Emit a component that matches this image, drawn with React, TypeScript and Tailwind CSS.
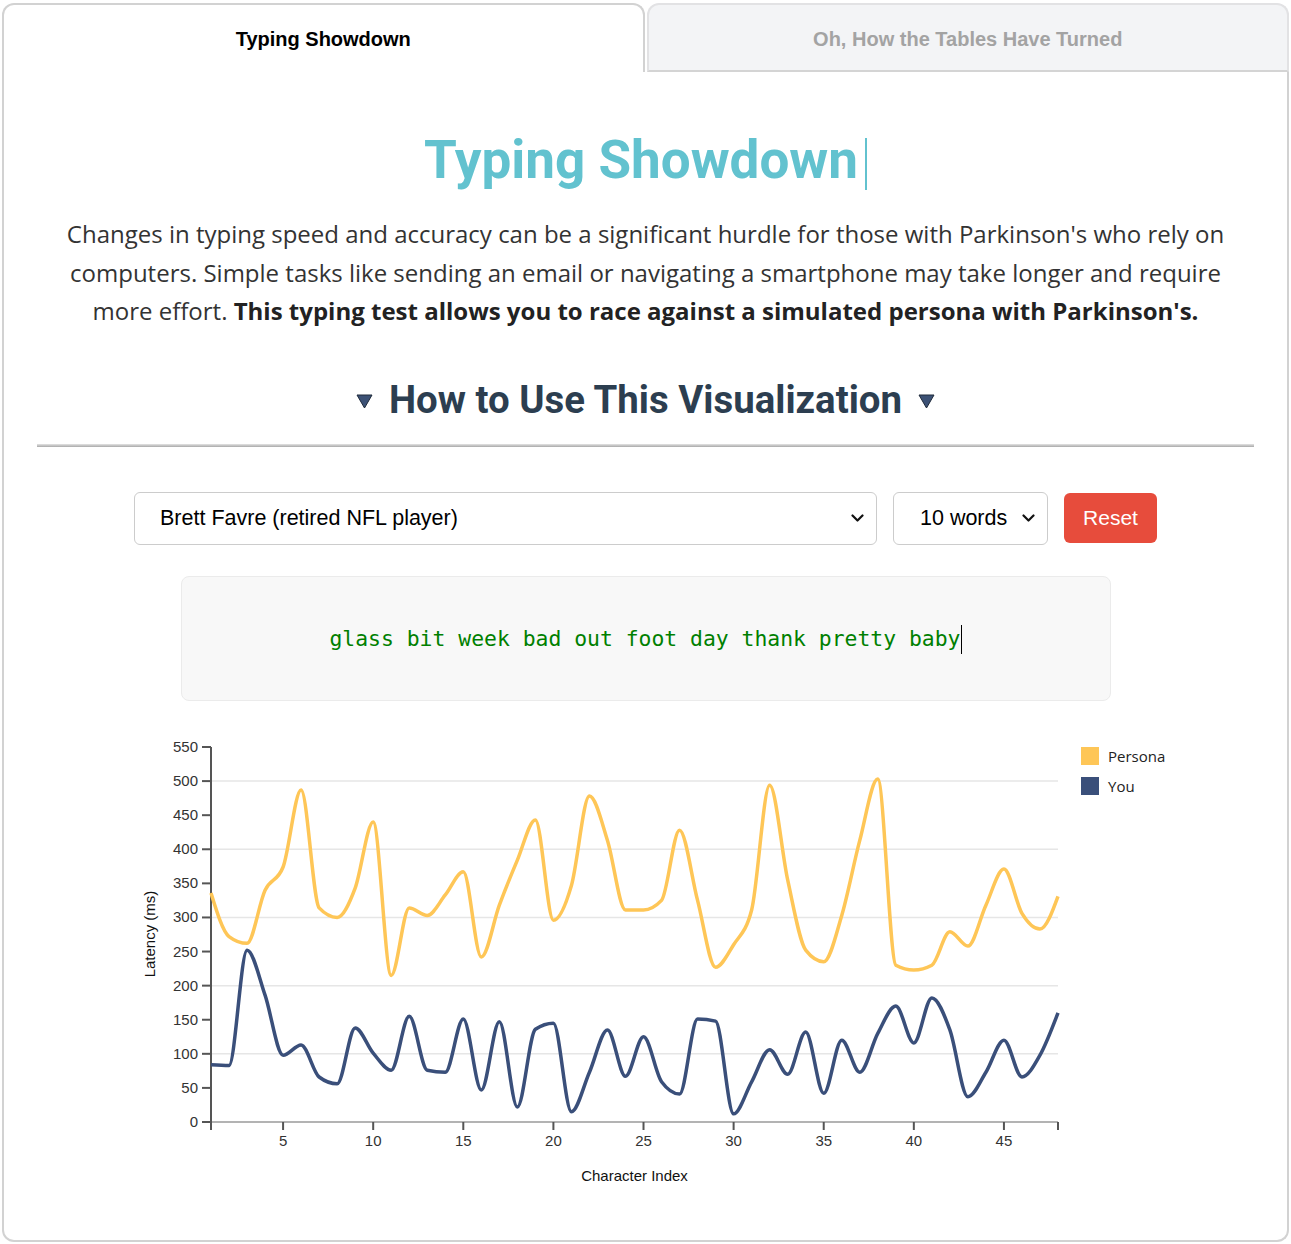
import React from 'react';

const persona = [336, 272, 262, 340, 374, 487, 314, 300, 343, 440, 215, 314, 303, 333, 367, 242, 318, 384, 443, 296, 347, 478, 413, 311, 311, 325, 428, 325, 227, 260, 311, 494, 355, 252, 235, 303, 413, 503, 230, 223, 230, 279, 258, 318, 371, 306, 283, 331];
const you = [84, 83, 252, 186, 98, 113, 66, 56, 138, 101, 76, 155, 76, 73, 151, 47, 147, 22, 136, 145, 15, 73, 135, 67, 125, 59, 41, 151, 148, 12, 59, 106, 70, 132, 42, 120, 73, 130, 170, 116, 182, 135, 37, 73, 120, 66, 98, 160];

// chart geometry (svg coords)
const ox = 174;
const plotW = 847;
const top = 27;
const plotH = 375;
const xs = (i: number) => ox + ((i - 1) * plotW) / 47;
const ys = (v: number) => top + ((550 - v) * plotH) / 550;

// d3 curveMonotoneX, hand-rolled
function monotonePath(pts: [number, number][]) {
  const n = pts.length;
  const t: number[] = new Array(n).fill(0);
  const sign = (v: number) => (v < 0 ? -1 : 1);
  for (let i = 1; i < n - 1; i++) {
    const [x0, y0] = pts[i - 1];
    const [x1, y1] = pts[i];
    const [x2, y2] = pts[i + 1];
    const h0 = x1 - x0;
    const h1 = x2 - x1;
    const s0 = (y1 - y0) / h0;
    const s1 = (y2 - y1) / h1;
    const p = (s0 * h1 + s1 * h0) / (h0 + h1);
    t[i] = (sign(s0) + sign(s1)) * Math.min(Math.abs(s0), Math.abs(s1), 0.5 * Math.abs(p)) || 0;
  }
  t[0] = ((3 * (pts[1][1] - pts[0][1])) / (pts[1][0] - pts[0][0]) - t[1]) / 2;
  t[n - 1] = ((3 * (pts[n - 1][1] - pts[n - 2][1])) / (pts[n - 1][0] - pts[n - 2][0]) - t[n - 2]) / 2;
  let d = `M${pts[0][0]},${pts[0][1]}`;
  for (let i = 0; i < n - 1; i++) {
    const [x0, y0] = pts[i];
    const [x1, y1] = pts[i + 1];
    const dx = (x1 - x0) / 3;
    d += `C${x0 + dx},${y0 + dx * t[i]},${x1 - dx},${y1 - dx * t[i + 1]},${x1},${y1}`;
  }
  return d;
}

const toPts = (arr: number[]) => arr.map((v, i) => [xs(i + 1), ys(v)] as [number, number]);

function Chevron() {
  return (
    <svg width="13" height="8" viewBox="0 0 13 8" className="pointer-events-none absolute right-[12px] top-1/2 -translate-y-1/2">
      <path d="M1.5 1.5 L6.5 6.5 L11.5 1.5" fill="none" stroke="#111" strokeWidth="2.2" strokeLinecap="round" strokeLinejoin="round" />
    </svg>
  );
}

function Tri() {
  return (
    <svg width="17" height="15" viewBox="0 0 17 15" className="mt-[4px]">
      <polygon points="1,1 16,1 8.5,14" fill="#3c5175" stroke="#1f2a3a" strokeWidth="1" strokeLinejoin="round" />
    </svg>
  );
}

function LatencyChart() {
  const yTicks = Array.from({ length: 12 }, (_, i) => i * 50);
  const grid = [100, 200, 300, 400, 500];
  const xTicks = [5, 10, 15, 20, 25, 30, 35, 40, 45];
  const y0 = top + plotH;
  return (
    <svg width="1217" height="490" viewBox="0 0 1217 490" className="block" fontFamily="'Liberation Sans', Arial, sans-serif">
      {grid.map((v) => (
        <line key={v} x1={ox} x2={ox + plotW} y1={ys(v)} y2={ys(v)} stroke="#e6e6e6" strokeWidth="1.5" />
      ))}
      {/* x axis */}
      <line x1={ox} x2={ox + plotW} y1={y0} y2={y0} stroke="#b3b3b3" strokeWidth="2" />
      <line x1={ox} x2={ox} y1={y0} y2={y0 + 8} stroke="#555" strokeWidth="2" />
      <line x1={ox + plotW} x2={ox + plotW} y1={y0} y2={y0 + 8} stroke="#555" strokeWidth="2" />
      {xTicks.map((i) => (
        <g key={i}>
          <line x1={xs(i)} x2={xs(i)} y1={y0} y2={y0 + 8} stroke="#555" strokeWidth="2" />
          <text x={xs(i)} y={y0 + 24} textAnchor="middle" fontSize="15" fill="#333">
            {i}
          </text>
        </g>
      ))}
      {/* y axis */}
      <line x1={ox} x2={ox} y1={top} y2={y0} stroke="#555" strokeWidth="2" />
      {yTicks.map((v) => (
        <g key={v}>
          <line x1={ox - 9} x2={ox} y1={ys(v)} y2={ys(v)} stroke="#555" strokeWidth="2" />
          <text x={ox - 13} y={ys(v) + 5} textAnchor="end" fontSize="15" fill="#333">
            {v}
          </text>
        </g>
      ))}
      <text transform="translate(118,214) rotate(-90)" textAnchor="middle" fontSize="15" fill="#111">
        Latency (ms)
      </text>
      <text x={ox + plotW / 2} y={461} textAnchor="middle" fontSize="15" fill="#111">
        Character Index
      </text>

      <path d={monotonePath(toPts(persona))} fill="none" stroke="#fec657" strokeWidth="3.5" />
      <path d={monotonePath(toPts(you))} fill="none" stroke="#3a4f7a" strokeWidth="3.5" />

      {/* legend */}
      <g fontFamily="'Open Sans', sans-serif" fontSize="15" fill="#222">
        <rect x={1044} y={27} width={18} height={18} fill="#fec657" />
        <text x={1071} y={42}>Persona</text>
        <rect x={1044} y={57} width={18} height={18} fill="#3a4f7a" />
        <text x={1071} y={72}>You</text>
      </g>
    </svg>
  );
}

export default function App() {
  return (
    <div className="bg-white px-[2px] pt-[3px] pb-[2px]">
      {/* tabs */}
      <div className="flex gap-[2px] font-['Liberation_Sans',Arial,sans-serif] text-[20px] font-bold">
        <div className="flex h-[69px] flex-1 items-center justify-center rounded-t-[12px] border-x-2 border-t-2 border-[#d2d2d2] bg-white pt-[1px] text-black">
          Typing Showdown
        </div>
        <div className="flex h-[69px] flex-1 items-center justify-center rounded-t-[12px] border-2 border-[#e2e2e4] border-b-[#d4d4d4] bg-[#f3f4f6] pt-[2px] text-[#a3a3a3]">
          Oh, How the Tables Have Turned
        </div>
      </div>

      {/* panel */}
      <div className="flex flex-col items-stretch rounded-b-[12px] border-x-2 border-b-2 border-[#d2d2d2] px-[33px] pb-[30px]">
        <h1 className="mt-[58px] flex items-center justify-center font-['Roboto',sans-serif] text-[53px] leading-[60px] font-bold text-[#62c2cf]">
          <span>Typing Showdown</span>
          <span className="mt-[8px] ml-[7px] inline-block h-[52px] w-[2px] bg-[#62c2cf]" />
        </h1>

        <p className="mt-[25px] text-center font-['Open_Sans',sans-serif] text-[24px] leading-[38.5px] text-[#333]">
          Changes in typing speed and accuracy can be a significant hurdle for those with Parkinson's who rely on computers. Simple tasks like sending an email or navigating a smartphone may take longer and require more effort.{' '}
          <strong className="font-bold text-[#222]">This typing test allows you to race against a simulated persona with Parkinson's.</strong>
        </p>

        <h2 className="mt-[46px] flex items-center justify-center gap-[16px] font-['Roboto',sans-serif] text-[38.4px] leading-[46px] font-bold text-[#2c3e50]">
          <Tri />
          <span>How to Use This Visualization</span>
          <Tri />
        </h2>

        <div className="mt-[21px] h-[3px] bg-gradient-to-b from-[#e4e4e4] to-[#a9a9a9]" />

        {/* controls */}
        <div className="mt-[45px] flex items-center justify-center gap-[16px] font-['Liberation_Sans',Arial,sans-serif] text-[21.5px] text-black">
          <div className="relative h-[53px] w-[743px] rounded-[6px] border border-[#cccccc] bg-white">
            <div className="flex h-full items-center pl-[25px]">Brett Favre (retired NFL player)</div>
            <Chevron />
          </div>
          <div className="relative h-[53px] w-[155px] rounded-[6px] border border-[#cccccc] bg-white">
            <div className="flex h-full items-center pl-[26px]">10 words</div>
            <Chevron />
          </div>
          <button type="button" className="h-[50px] w-[93px] rounded-[6px] bg-[#e74c3c] text-[21px] text-white">
            Reset
          </button>
        </div>

        {/* typing box */}
        <div className="mx-auto mt-[31px] flex h-[125px] w-[930px] items-center justify-center rounded-[8px] border border-[#ebebeb] bg-[#f8f8f8] pt-[2px]">
          <span className="font-['DejaVu_Sans_Mono',monospace] text-[21.4px] text-[#008000]">
            glass bit week bad out foot day thank pretty baby
          </span>
          <span className="inline-block h-[29px] w-px bg-black" />
        </div>

        <div className="mt-[19px]">
          <LatencyChart />
        </div>
      </div>
    </div>
  );
}
